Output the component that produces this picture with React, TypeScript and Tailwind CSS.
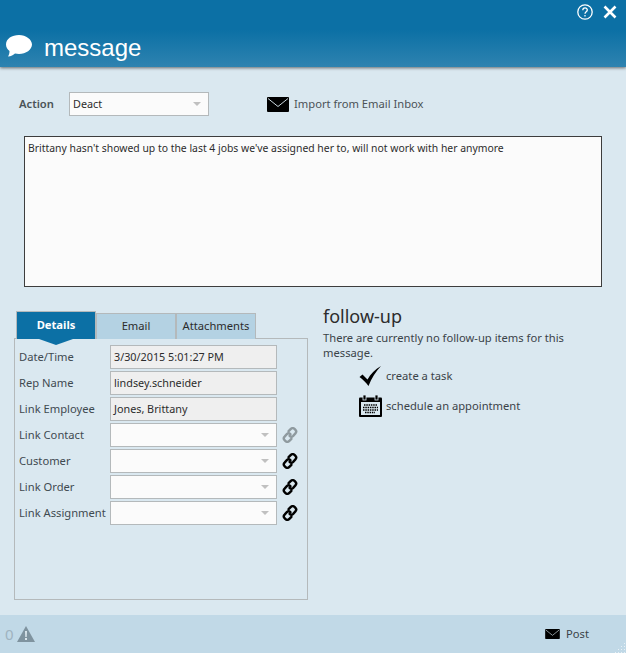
import React from "react";

const font = "font-['Noto_Sans',sans-serif]";

const Envelope = ({ className }: { className?: string }) => (
  <svg viewBox="0 0 22 15" className={className}>
    <rect width="22" height="15" rx="1" fill="#000" />
    <path d="M1 1.500 11 9.500 21 1.500" fill="none" stroke="#c9d6dd" strokeWidth="1" />
  </svg>
);

const LinkIcon = ({ muted }: { muted?: boolean }) => (
  <svg viewBox="0 0 16 16" className="w-4 h-4 ml-[5px] shrink-0" fill="none" stroke={muted ? "#8f9a9f" : "#000"} strokeWidth="2.400" strokeLinecap="round">
    <path d="M6.600 4.200 8.600 2.200a2.600 2.600 0 0 1 4.200 0l.6.6a2.600 2.600 0 0 1 0 3.600L11.200 8.800a2.600 2.600 0 0 1-3.600 0" />
    <path d="M9.400 11.800 7.400 13.800a2.600 2.600 0 0 1-4.200 0l-.6-.6a2.600 2.600 0 0 1 0-3.600L4.800 7.200a2.600 2.600 0 0 1 3.600 0" />
  </svg>
);

const Caret = () => (
  <span className="w-0 h-0 border-x-[4px] border-x-transparent border-t-[4px] border-t-[#c0c0c0]" />
);

const ReadOnlyRow = ({ label, value }: { label: string; value: string }) => (
  <div className="flex items-center h-6">
    <span className="w-[95px] pl-[4px] text-[#3f4a50] whitespace-nowrap">{label}</span>
    <div className="w-[167px] h-6 bg-[#efefef] border border-[#b4b9bb] pl-[3px] pt-px flex items-center text-[10.8px] text-[#2c2c2c] whitespace-nowrap">{value}</div>
  </div>
);

const LinkRow = ({ label, muted }: { label: string; muted?: boolean }) => (
  <div className="flex items-center h-6">
    <span className="w-[95px] pl-[4px] text-[#3f4a50] whitespace-nowrap">{label}</span>
    <div className="w-[167px] h-6 bg-[#fbfbfb] border border-[#b4b9bb] flex items-center justify-end pr-[7px]">
      <Caret />
    </div>
    <LinkIcon muted={muted} />
  </div>
);

export default function App() {
  return (
    <div className={`${font} w-[626px] h-[653px] flex flex-col bg-[#dae8f0] text-[11.2px] overflow-hidden`}>
      {/* title bar */}
      <div className="h-[67px] shrink-0 bg-[linear-gradient(#0c70a5_0%,#0c70a5_45%,#2e83b0_100%)] shadow-[0_1px_3px_rgba(0,0,0,0.55)] relative z-10 flex items-end pl-[6px] pb-[3px]">
        <svg viewBox="0 0 26 22" className="w-[26px] h-[22px] mb-[7px]" fill="#fff">
          <path d="M13 0C6 0 0 3.600 0 9.500c0 3 1.500 5 3.500 6.500 0 2-.5 4-1.500 5.500 3 0 5.500-1.500 7-3 1.300.3 2.600.5 4 .5 7 0 13-4.500 13-9.500S20 0 13 0Z" />
        </svg>
        <span className="font-['Liberation_Sans',sans-serif] text-white text-[24px] leading-[32px] ml-[12px]">message</span>
        <div className="absolute right-[9px] top-[4px] flex items-center gap-[10px]">
          <svg viewBox="0 0 16 16" className="w-4 h-4" fill="none" stroke="#fff" strokeWidth="1.300">
            <circle cx="8" cy="8" r="7.200" />
            <path d="M5.800 6.200c0-3 4.500-3 4.500-.2 0 1.800-2.300 1.800-2.300 3.800" />
            <path d="M8 11v1.500" />
          </svg>
          <svg viewBox="0 0 14 14" className="w-[14px] h-[14px]" stroke="#fff" strokeWidth="2.600">
            <path d="M1.500 1.500 12.500 12.500M12.500 1.500 1.500 12.500" />
          </svg>
        </div>
      </div>

      <div className="flex-1 flex flex-col min-h-0">
        {/* action row */}
        <div className="flex items-center h-[24px] mt-[25px] pl-[19px]">
          <span className="w-[50px] font-semibold text-[#4a5257]">Action</span>
          <div className="w-[140px] h-[24px] bg-[#fbfbfb] border border-[#b4b9bb] flex items-center justify-between pl-[3px] pr-[7px] text-[10.8px] text-[#2c2c2c]">
            Deact
            <Caret />
          </div>
          <Envelope className="w-[22px] h-[15px] ml-[58px]" />
          <span className="ml-[5px] text-[#4a5257]">Import from Email Inbox</span>
        </div>

        {/* message box */}
        <div className="mx-[24px] mt-[20px] h-[151px] bg-[#fbfbfb] border border-[#3d3d3d] px-[3px] py-[3px] text-[10.4px] text-[#2c2c2c] leading-[16px]">
          Brittany hasn't showed up to the last 4 jobs we've assigned her to, will not work with her anymore
        </div>

        <div className="flex mt-[24px] pl-[14px]">
          {/* details tabs */}
          <div className="w-[294px]">
            <div className="flex pl-[2px] h-[28px] items-end relative z-10">
              <div className="relative w-[80px] h-[28px] bg-[#0c70a5] border border-[#b4b9bb] border-b-0 flex items-center justify-center text-white font-bold">
                Details
                <span className="absolute left-[22px] top-[27px] w-0 h-0 border-x-[17px] border-x-transparent border-t-[6px] border-t-[#0c70a5]" />
              </div>
              <div className="w-[80px] h-[26px] bg-[#b4d2e3] border border-[#b4b9bb] border-b-0 flex items-center justify-center text-[#2c2c2c]">Email</div>
              <div className="w-[80px] h-[26px] bg-[#b4d2e3] border border-[#b4b9bb] border-b-0 flex items-center justify-center text-[#2c2c2c]">Attachments</div>
            </div>
            <div className="h-[262px] border border-[#b4b9bb] -mt-px pt-[6px] flex flex-col gap-[2px]">
              <ReadOnlyRow label="Date/Time" value="3/30/2015 5:01:27 PM" />
              <ReadOnlyRow label="Rep Name" value="lindsey.schneider" />
              <ReadOnlyRow label="Link Employee" value="Jones, Brittany" />
              <LinkRow label="Link Contact" muted />
              <LinkRow label="Customer" />
              <LinkRow label="Link Order" />
              <LinkRow label="Link Assignment" />
            </div>
          </div>

          {/* follow-up */}
          <div className="ml-[15px] w-[285px] text-[#3a4348]">
            <div className="text-[18px] leading-[24px] text-[#2c2c2c] -mt-[7px]">follow-up</div>
            <p className="mt-[2px] leading-[15px] w-[280px]">There are currently no follow-up items for this message.</p>
            <div className="flex items-center pl-[36px] mt-[4px] h-[24px]">
              <svg viewBox="0 0 22 20" className="w-[23px] h-[20px]" fill="#000">
                <path d="M0 11 3 8.500 8 13.500C11 8 15.500 3.500 21.500 0 16.500 5.500 12 12 9 20 6.500 16.500 3.500 13.500 0 11Z" />
              </svg>
              <span className="ml-[4px]">create a task</span>
            </div>
            <div className="flex items-center pl-[36px] mt-[6px] h-[24px]">
              <svg viewBox="0 0 23 22" className="w-[23px] h-[22px]">
                <rect x="0" y="2.500" width="23" height="19.500" rx="1" fill="#000" />
                <rect x="2" y="7" width="19" height="13" fill="#dae8f0" />
                <rect x="4" y="0" width="3" height="5" fill="#000" stroke="#dae8f0" strokeWidth="0.800" />
                <rect x="16" y="0" width="3" height="5" fill="#000" stroke="#dae8f0" strokeWidth="0.800" />
                <path d="M5 10h13M4 12.500h15M4 15h15M6 17.500h10" stroke="#000" strokeWidth="1.500" strokeDasharray="1.500 0.800" />
              </svg>
              <span className="ml-[4px]">schedule an appointment</span>
            </div>
          </div>
        </div>
      </div>

      {/* footer */}
      <div className="h-[38px] shrink-0 bg-[#c1d9e7] flex items-center justify-between pl-[5px] pr-[37px] relative">
        <div className="flex items-center gap-[3px]">
          <span className="text-[15px] leading-none text-[#9fb3bf]">0</span>
          <svg viewBox="0 0 18 16" className="w-[18px] h-[16px]">
            <path d="M9 0 18 16H0Z" fill="#7f939f" />
            <path d="M8 5h2l-.3 6H8.300ZM8 12h2v2H8Z" fill="#dbe6ec" />
          </svg>
        </div>
        <div className="flex items-center">
          <Envelope className="w-[15px] h-[10px]" />
          <span className="ml-[6px] text-[#3a4348]">Post</span>
        </div>
        {/* resize grip */}
        <svg viewBox="0 0 12 12" className="absolute right-0 bottom-0 w-3 h-3" fill="#e8f1f6">
          <rect x="10" y="2" width="1" height="1" />
          <rect x="10" y="5" width="1" height="1" />
          <rect x="7" y="5" width="1" height="1" />
          <rect x="10" y="8" width="1" height="1" />
          <rect x="7" y="8" width="1" height="1" />
          <rect x="4" y="8" width="1" height="1" />
          <rect x="10" y="11" width="1" height="1" />
          <rect x="7" y="11" width="1" height="1" />
          <rect x="4" y="11" width="1" height="1" />
          <rect x="1" y="11" width="1" height="1" />
        </svg>
      </div>
    </div>
  );
}
